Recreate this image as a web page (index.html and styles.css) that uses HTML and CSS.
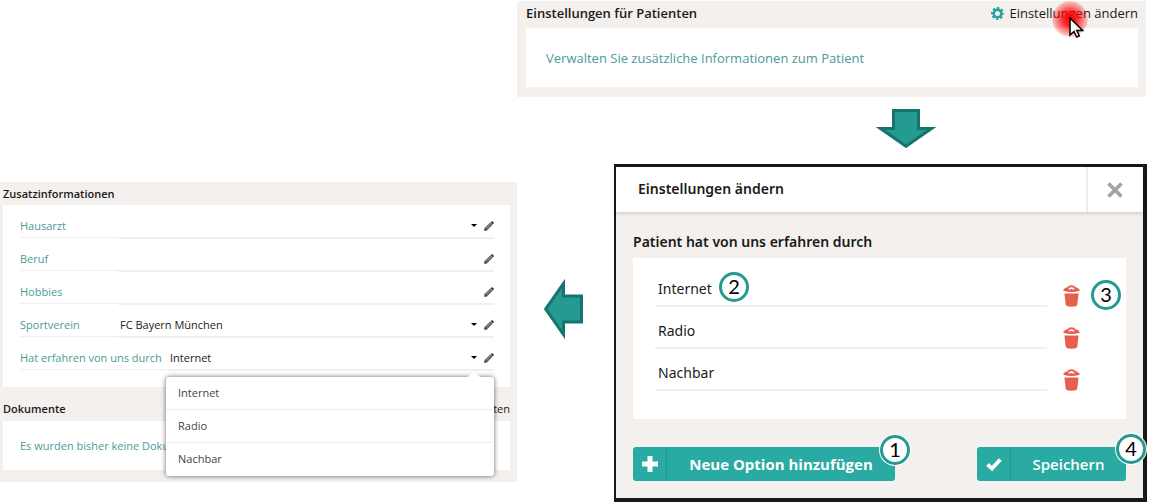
FILE: index.html
```
<!DOCTYPE html>
<html lang="de">
<head>
    <meta charset="UTF-8">
    <meta name="viewport" content="width=device-width, initial-scale=1.0">
    <title>Einstellungen für Patienten</title>
    <link rel="stylesheet" href="styles.css">
</head>
<body>
    <svg class="sprite" aria-hidden="true">
        <symbol id="pencil" viewBox="0 0 10 10">
            <path d="M0.3 9.7 L0.8 6.8 L6.2 1.4 L8.6 3.8 L3.2 9.3 Z" fill="#66666a"/>
            <path d="M6.5 1.2 L7.4 0.4 Q8.1 -0.1 8.7 0.4 L9.6 1.4 Q10.1 2 9.6 2.6 L8.8 3.5 Z" fill="#333"/>
            <path d="M0.3 9.7 L0.8 6.8 L3.2 9.3 Z" fill="#444"/>
            <path d="M2.3 7.2 L6.6 2.9" stroke="#a4a4a8" stroke-width="0.7"/>
        </symbol>
        <symbol id="trash" viewBox="0 0 17 22">
            <path d="M1.4 8.4 H15.6 L14.3 19.6 Q14 21.8 8.5 21.8 Q3 21.8 2.7 19.6 Z" fill="#e65f4f"/>
            <path d="M0.2 5.8 Q0.4 3.2 4.4 2.2 Q5.4 0.2 8.5 0.2 Q11.6 0.2 12.6 2.2 Q16.6 3.2 16.8 5.8 Q8.5 8.2 0.2 5.8 Z" fill="#e65f4f"/>
            <path d="M5.2 4.2 Q6 2.2 8.5 2.2 Q11 2.2 11.8 4.2 L10.4 4.6 Q8.5 3.6 6.6 4.6 Z" fill="#fff"/>
        </symbol>
    </svg>

    <section class="panel details">
        <h2>Zusatzinformationen</h2>
        <div class="card fields">
            <div class="field">
                <label for="hausarzt">Hausarzt</label>
                <input id="hausarzt" type="text">
                <button class="caret" aria-label="Auswahl öffnen"></button>
                <button class="edit" aria-label="Bearbeiten"><svg><use href="#pencil"/></svg></button>
            </div>
            <div class="field">
                <label for="beruf">Beruf</label>
                <input id="beruf" type="text">
                <button class="edit" aria-label="Bearbeiten"><svg><use href="#pencil"/></svg></button>
            </div>
            <div class="field">
                <label for="hobbies">Hobbies</label>
                <input id="hobbies" type="text">
                <button class="edit" aria-label="Bearbeiten"><svg><use href="#pencil"/></svg></button>
            </div>
            <div class="field">
                <label for="verein">Sportverein</label>
                <input id="verein" type="text" value="FC Bayern München">
                <button class="caret" aria-label="Auswahl öffnen"></button>
                <button class="edit" aria-label="Bearbeiten"><svg><use href="#pencil"/></svg></button>
            </div>
            <div class="field wide">
                <label for="quelle">Hat erfahren von uns durch</label>
                <input id="quelle" type="text" value="Internet">
                <button class="caret" aria-label="Auswahl öffnen"></button>
                <button class="edit" aria-label="Bearbeiten"><svg><use href="#pencil"/></svg></button>
                <ul class="menu">
                    <li>Internet</li>
                    <li>Radio</li>
                    <li>Nachbar</li>
                </ul>
            </div>
        </div>
        <div class="panel-head">
            <h2>Dokumente</h2>
            <a href="#">Bearbeiten</a>
        </div>
        <p class="card documents">Es wurden bisher keine Dokumente</p>
    </section>

    <main>
        <section class="panel settings">
            <div class="panel-head">
                <h2>Einstellungen für Patienten</h2>
                <a href="#" class="change">
                    <svg class="gear" viewBox="0 0 13 13">
                        <circle cx="6.5" cy="6.5" r="3.8" fill="none" stroke="#25a3a0" stroke-width="2.6"/>
                        <circle cx="6.5" cy="6.5" r="5.5" fill="none" stroke="#25a3a0" stroke-width="2" stroke-dasharray="2.4 1.92" stroke-dashoffset="1.2"/>
                    </svg>
                    Einstellungen ändern
                    <span class="click">
                        <svg viewBox="0 0 15 21">
                            <path d="M1 1 V18 L5 14.4 L7.6 20 L10.3 18.8 L7.8 13.4 H13.6 Z" fill="#fff" stroke="#000" stroke-width="1.5"/>
                        </svg>
                    </span>
                </a>
            </div>
            <p class="card hint">Verwalten Sie zusätzliche Informationen zum Patient</p>
        </section>

        <svg class="arrow-down" viewBox="0 0 60 39">
            <path d="M17.5 1.5 H42.5 V19.5 H55.5 L30 37.3 L4.5 19.5 H17.5 Z" fill="#259a91" stroke="#15756e" stroke-width="3"/>
        </svg>

        <div class="step">
            <svg class="arrow-left" viewBox="0 0 39 60">
                <path d="M37.5 17 H19.5 V4.5 L1.7 30 L19.5 55.5 V43 H37.5 Z" fill="#259a91" stroke="#15756e" stroke-width="3"/>
            </svg>

            <section class="dialog">
                <header>
                    <h3>Einstellungen ändern</h3>
                    <button class="close" aria-label="Schließen">
                        <svg viewBox="0 0 16 16"><path d="M1.5 1.5 L14.5 14.5 M14.5 1.5 L1.5 14.5" stroke="#a3a3a3" stroke-width="3.6"/></svg>
                    </button>
                </header>
                <div class="content">
                    <h3>Patient hat von uns erfahren durch</h3>
                    <div class="card options">
                        <div class="option">
                            <input type="text" value="Internet" aria-label="Option 1">
                            <button class="delete" aria-label="Löschen"><svg><use href="#trash"/></svg></button>
                            <span class="badge badge-edit">2</span>
                            <span class="badge badge-delete">3</span>
                        </div>
                        <div class="option">
                            <input type="text" value="Radio" aria-label="Option 2">
                            <button class="delete" aria-label="Löschen"><svg><use href="#trash"/></svg></button>
                        </div>
                        <div class="option">
                            <input type="text" value="Nachbar" aria-label="Option 3">
                            <button class="delete" aria-label="Löschen"><svg><use href="#trash"/></svg></button>
                        </div>
                    </div>
                    <div class="actions">
                        <div class="action add">
                            <button class="button">
                                <span class="icon"><svg viewBox="0 0 16 16"><path d="M8 0 V16 M0 8 H16" stroke="#fff" stroke-width="5"/></svg></span>
                                <span class="text">Neue Option hinzufügen</span>
                            </button>
                            <span class="badge badge-add">1</span>
                        </div>
                        <div class="action save">
                            <button class="button">
                                <span class="icon"><svg viewBox="0 0 16 16"><path d="M1.5 8.5 L6 12.5 L14.3 3.5" fill="none" stroke="#fff" stroke-width="3.8"/></svg></span>
                                <span class="text">Speichern</span>
                            </button>
                            <span class="badge badge-save">4</span>
                        </div>
                    </div>
                </div>
            </section>
        </div>
    </main>
</body>
</html>
```
FILE: styles.css
```
* {
    box-sizing: border-box;
}
body {
    display: grid;
    grid-template-columns: 45% 1fr;
    align-items: start;
    margin: 0;
    background-color: #fff;
    color: #1a1a1a;
    font-family: "Open Sans", "Noto Sans", sans-serif;
    font-size: 11px;
}
h2, h3, p, ul {
    margin: 0;
    padding: 0;
}
h2, h3 {
    font-weight: 600;
}
a {
    color: inherit;
    text-decoration: none;
}
button {
    padding: 0;
    border: none;
    background: none;
    font-family: inherit;
    cursor: pointer;
}
input {
    min-width: 0;
    padding: 0;
    border: none;
    background: none;
    color: #1a1a1a;
    font-family: inherit;
    font-size: inherit;
    outline: none;
}
svg {
    display: block;
}
.sprite {
    position: absolute;
    width: 0;
    height: 0;
}
.panel {
    background-color: #f4f0ed;
}
.panel-head {
    display: flex;
    justify-content: space-between;
}
.card {
    background-color: #fff;
}

/* Zusatzinformationen */
.details {
    margin-top: 182px;
    padding: 0 7px 12px 3px;
}
.details h2 {
    font-size: 11px;
    line-height: 23px;
}
.details .panel-head {
    padding-top: 10px;
    line-height: 24px;
}
.fields {
    padding: 0 16px 17px 17px;
}
.field {
    display: flex;
    align-items: center;
    position: relative;
    height: 33px;
    padding-top: 8px;
}
.field label {
    width: 98px;
    height: 25px;
    border-bottom: 1px solid #efefef;
    color: #4b9b97;
    line-height: 25px;
}
.field.wide label {
    width: 148px;
}
.field input {
    flex: 1;
    height: 25px;
    padding-left: 2px;
}
.field::after {
    content: "";
    position: absolute;
    right: 0;
    bottom: -1px;
    left: 98px;
    height: 2px;
    background-color: #efefef;
}
.field.wide::after {
    left: 148px;
}
.caret {
    width: 0;
    height: 0;
    margin-right: 7px;
    border-top: 3px solid #000;
    border-right: 3px solid transparent;
    border-left: 3px solid transparent;
}
.edit svg {
    width: 10px;
    height: 10px;
}
.menu {
    position: absolute;
    top: 40px;
    right: 0;
    left: 146px;
    z-index: 2;
    border-radius: 3px;
    background-color: #fff;
    box-shadow: 0 0 5px rgba(0, 0, 0, 0.6);
    color: #444;
    list-style: none;
}
.menu::before {
    content: "";
    position: absolute;
    top: -6px;
    right: 14px;
    border-right: 6px solid transparent;
    border-bottom: 6px solid #fff;
    border-left: 6px solid transparent;
}
.menu li {
    height: 33px;
    margin-right: 2px;
    padding-left: 12px;
    border-bottom: 1px solid #ececec;
    line-height: 32px;
}
.menu li:last-child {
    border-bottom: none;
}
.documents {
    padding: 0 17px;
    color: #4b9b97;
    line-height: 49px;
}

/* Einstellungen für Patienten */
.settings {
    margin: 1px 3px 0 0;
    padding: 0 8px 10px 9px;
}
.settings .panel-head {
    height: 27px;
}
.settings h2,
.change {
    height: 25px;
    font-size: 13px;
    line-height: 25px;
}
.change {
    display: flex;
    align-items: center;
    gap: 5px;
    position: relative;
}
.gear {
    width: 13px;
    height: 13px;
}
.click {
    position: absolute;
    top: 0;
    right: 50px;
    width: 36px;
    height: 36px;
    border-radius: 50%;
    background: radial-gradient(circle, #f00 0%, rgba(255, 0, 0, 0.85) 25%, rgba(255, 0, 0, 0.2) 68%, transparent 72%);
}
.click svg {
    width: 15px;
    height: 21px;
    margin: 16px 0 0 17px;
}
.hint {
    padding: 2px 20px 0;
    color: #4b9b97;
    font-size: 13px;
    line-height: 57px;
    padding-top: 2px;
}
.arrow-down {
    width: 60px;
    height: 39px;
    margin: 12px 213px 16px auto;
}
.step {
    display: flex;
    align-items: flex-start;
    gap: 31px;
    margin: 0 2px 0 27px;
}
.arrow-left {
    width: 39px;
    height: 60px;
    margin-top: 115px;
}

/* Dialog */
.dialog {
    flex: 1;
    border: solid #191919;
    border-width: 3px 4px 4px 2px;
    background-color: #f4f0ed;
    font-family: "Noto Sans", sans-serif;
    font-size: 14px;
}
.dialog h3 {
    font-size: 14px;
}
.dialog header {
    display: flex;
    justify-content: space-between;
    height: 45px;
    background-color: #fff;
    box-shadow: 0 1px 4px rgba(0, 0, 0, 0.2);
    line-height: 44px;
}
.dialog header h3 {
    padding-left: 22px;
}
.close {
    display: flex;
    align-items: center;
    justify-content: center;
    width: 57px;
    padding-right: 2px;
    border-left: 2px solid #ececec;
}
.close svg {
    width: 16px;
    height: 16px;
}
.content {
    padding: 15px 17px 17px;
}
.content h3 {
    height: 31px;
    line-height: 29px;
}
.options {
    padding: 7px 46px 28px 22px;
}
.option {
    display: flex;
    align-items: center;
    gap: 16px;
    position: relative;
    height: 42px;
}
.option input {
    flex: 1;
    height: 42px;
    padding: 6px 0 0 3px;
    border-bottom: 2px solid #efefef;
}
.delete {
    padding-top: 20px;
}
.delete svg {
    width: 17px;
    height: 22px;
}
.actions {
    display: flex;
    justify-content: space-between;
    margin-top: 28px;
}
.action {
    position: relative;
}
.add {
    width: 262px;
}
.save {
    width: 149px;
}
.button {
    display: flex;
    width: 100%;
    height: 34px;
    border-radius: 3px;
    background-color: #29aaa3;
    color: #fff;
    font-family: "Open Sans", sans-serif;
    font-size: 15px;
    font-weight: 600;
    line-height: 34px;
}
.add .button {
    font-weight: 700;
}
.icon {
    display: flex;
    align-items: center;
    justify-content: center;
    width: 34px;
    height: 34px;
    border-right: 1px solid #23938d;
}
.icon svg {
    width: 16px;
    height: 16px;
}
.text {
    flex: 1;
}

/* Nummern */
.badge {
    position: absolute;
    width: 30px;
    height: 30px;
    border: 3px solid #259a91;
    border-radius: 50%;
    background-color: #fff;
    box-shadow: 0 0 0 1px #fff;
    color: #000;
    font-family: Lato, sans-serif;
    font-size: 20px;
    font-weight: 400;
    line-height: 23px;
    text-align: center;
}
.badge-edit {
    top: 7px;
    left: 64px;
}
.badge-delete {
    top: 15px;
    right: -41px;
}
.badge-add {
    top: -12px;
    right: -15px;
}
.badge-save {
    top: -13px;
    right: -20px;
}
```
